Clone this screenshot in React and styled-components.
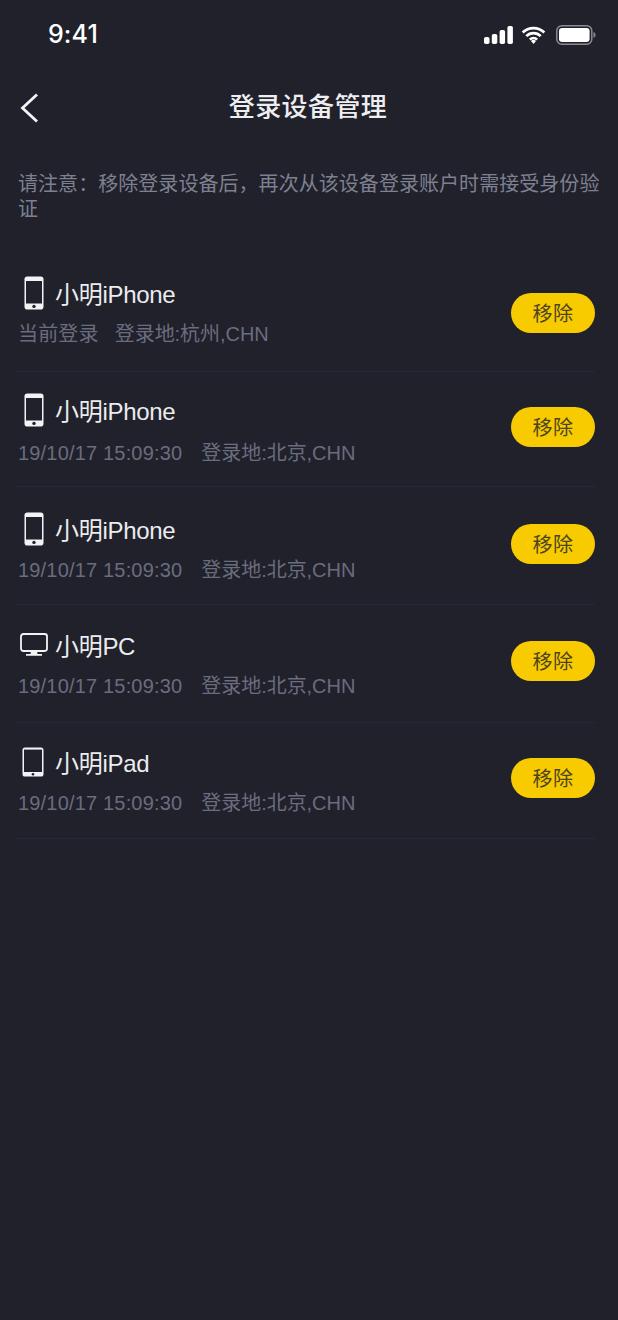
import React from "react";
import styled, { createGlobalStyle } from "styled-components";

const Global = createGlobalStyle`
  html, body { margin: 0; padding: 0; background: #20212b; }
  * { box-sizing: border-box; }
`;
const FONT = `"Liberation Sans", "Noto Sans CJK SC", sans-serif`;

const Page = styled.div`
  width: 618px; height: 1320px; background: #20212b; overflow: hidden;
  font-family: ${FONT}; display: flex; flex-direction: column;
`;
const StatusBar = styled.div`
  height: 68px; display: flex; justify-content: space-between; align-items: center;
  padding: 1px 22px 0 48px;
`;
const Clock = styled.div`
  color: #fff; font: 500 25px/1 Inter, ${FONT}; letter-spacing: 0.1px;
`;
const StatusIcons = styled.div`display: flex; align-items: center; gap: 8px;`;
const NavBar = styled.div`
  height: 78px; display: flex; align-items: center; justify-content: center; position: relative;
`;
const BackIcon = styled.svg`position: absolute; left: 17px; top: 24px;`;
const Title = styled.h1`
  margin: 0 2px 0 0; color: #eeeef0; font-size: 26px; font-weight: 500; line-height: 1; letter-spacing: 0.4px;
`;
const Notice = styled.p`
  margin: 26px 0 0; padding: 0 16px 0 18px; color: #7e8091; font-size: 20px; line-height: 25px;
  letter-spacing: 0.05px; height: 84px;
`;
const List = styled.div`padding: 0 23px 0 19px;`;
const Row = styled.div`
  height: ${p => p.$h}px; display: flex; align-items: center; justify-content: space-between;
  border-bottom: 1px solid #272833; padding-bottom: ${p => p.$pb}px; margin-left: -3px;
`;
const Info = styled.div`display: flex; flex-direction: column; margin-top: ${p => p.$mt}px;`;
const NameLine = styled.div`display: flex; align-items: center; height: 34px;`;
const IconSlot = styled.div`width: 36px; display: flex; align-items: center; margin: -4px 0 0 3px;`;
const Name = styled.span`color: #ececee; font-size: 24px; line-height: 1; letter-spacing: -0.3px;`;
const Meta = styled.div`
  display: flex; gap: ${p => p.$sep}px; color: #6a6c7f; font-size: 20px; line-height: 26px;
  margin-top: ${p => p.$gap}px; margin-left: 2px; white-space: pre;
`;
const MetaTime = styled.span`letter-spacing: 0.18px;`;
const MetaPlace = styled.span`letter-spacing: -0.05px;`;
const RemoveButton = styled.button`
  width: 84px; height: 40px; border: none; border-radius: 20px; background: #f8cb00; color: #4c4420;
  font: 400 20px/1 ${FONT}; padding: 2px 0 0; letter-spacing: 0.5px;
`;

const Phone = () => (
  <svg width="20" height="34" viewBox="0 0 20 34" style={{ marginLeft: 5 }}>
    <rect x="0.5" y="0.5" width="19" height="33" rx="2.8" fill="#f3f3f5" />
    <rect x="2" y="5" width="16" height="22.5" fill="#20212b" />
    <circle cx="10" cy="30.4" r="1.7" fill="#20212b" />
  </svg>
);
const Monitor = () => (
  <svg width="28" height="24" viewBox="0 0 28 24" style={{ marginLeft: 1 }}>
    <rect x="1" y="1" width="26" height="17" rx="2.4" fill="none" stroke="#f3f3f5" strokeWidth="1.8" />
    <path d="M11 18h6l.5 3h4.500v1.800H6V21h4.500z" fill="#f3f3f5" />
  </svg>
);
const Tablet = () => (
  <svg width="22" height="30" viewBox="0 0 22 30" style={{ marginLeft: 3 }}>
    <rect x="0.5" y="0.500" width="21" height="29" rx="2.6" fill="#f3f3f5" />
    <rect x="2" y="2.600" width="18" height="22.400" fill="#20212b" />
    <circle cx="11" cy="27.300" r="1.300" fill="#20212b" />
  </svg>
);

const TIME = "19/10/17 15:09:30";
const rows = [
  { icon: <Phone />, name: "小明iPhone", time: "当前登录", place: "登录地:杭州,CHN", h: 116, pb: 2, mt: 0, gap: 9, sep: 16 },
  { icon: <Phone />, name: "小明iPhone", time: TIME, place: "登录地:北京,CHN", h: 115, pb: 5, mt: 8, gap: 11, sep: 19 },
  { icon: <Phone />, name: "小明iPhone", time: TIME, place: "登录地:北京,CHN", h: 118, pb: 4, mt: 10, gap: 9, sep: 19 },
  { icon: <Monitor />, name: "小明PC", time: TIME, place: "登录地:北京,CHN", h: 118, pb: 6, mt: 8, gap: 9, sep: 19 },
  { icon: <Tablet />, name: "小明iPad", time: TIME, place: "登录地:北京,CHN", h: 116, pb: 6, mt: 8, gap: 9, sep: 19 },
];

export default function App() {
  return (
    <Page>
      <Global />
      <StatusBar>
        <Clock>9:41</Clock>
        <StatusIcons>
          <svg width="29" height="18" viewBox="0 0 29 18" fill="#fff">
            <rect x="0" y="11" width="5.500" height="7" rx="1.800" />
            <rect x="7.800" y="8" width="5.500" height="10" rx="1.800" />
            <rect x="15.600" y="4" width="5.500" height="14" rx="1.800" />
            <rect x="23.400" y="0" width="5.500" height="18" rx="1.800" />
          </svg>
          <svg width="25" height="18" viewBox="0 0 25 18">
            <path d="M1.700 6.500a15.300 15.300 0 0 1 21.600 0M5.300 10.100a10.200 10.200 0 0 1 14.400 0M8.900 13.600a5.100 5.100 0 0 1 7.200 0" fill="none" stroke="#fff" strokeWidth="2.700" />
            <path d="M12.500 18l-2.500-3a3.600 3.600 0 0 1 5 0z" fill="#fff" />
          </svg>
          <svg width="40" height="20" viewBox="0 0 40 20" style={{ marginLeft: 2 }}>
            <rect x="0.800" y="0.800" width="35" height="18.400" rx="5" fill="none" stroke="#8a8b92" strokeWidth="1.500" />
            <rect x="3" y="3" width="30.600" height="14" rx="3.200" fill="#fff" />
            <path d="M37.500 7c1.300.4 2 1.600 2 3s-.7 2.600-2 3z" fill="#8a8b92" />
          </svg>
        </StatusIcons>
      </StatusBar>
      <NavBar>
        <BackIcon width="26" height="32" viewBox="0 0 26 32">
          <path d="M20 2.500 5.500 16 20 29.500" fill="none" stroke="#f4f4f5" strokeWidth="2.800" />
        </BackIcon>
        <Title>登录设备管理</Title>
      </NavBar>
      <Notice>请注意：移除登录设备后，再次从该设备登录账户时需接受身份验证</Notice>
      <List>
        {rows.map((r, i) => (
          <Row key={i} $h={r.h} $pb={r.pb}>
            <Info $mt={r.mt}>
              <NameLine>
                <IconSlot>{r.icon}</IconSlot>
                <Name>{r.name}</Name>
              </NameLine>
              <Meta $gap={r.gap} $sep={r.sep}>
                <MetaTime>{r.time}</MetaTime>
                <MetaPlace>{r.place}</MetaPlace>
              </Meta>
            </Info>
            <RemoveButton>移除</RemoveButton>
          </Row>
        ))}
      </List>
    </Page>
  );
}
